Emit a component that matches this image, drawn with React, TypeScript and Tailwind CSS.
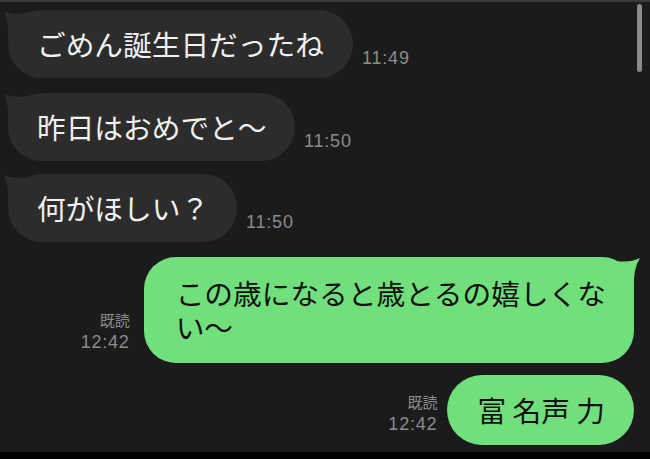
import React from "react";

type Incoming = { text: string; time: string; width: string; gapTop: string };

const incoming: Incoming[] = [
  { text: "ごめん誕生日だったね", time: "11:49", width: "w-[345px]", gapTop: "mt-[8px]" },
  { text: "昨日はおめでと〜", time: "11:50", width: "w-[287px]", gapTop: "mt-[15px]" },
  { text: "何がほしい？", time: "11:50", width: "w-[229px]", gapTop: "mt-[13px]" },
];

const jp = "font-['Noto_Sans_CJK_JP','Noto_Sans',sans-serif]";
const num = "font-['Liberation_Sans','Noto_Sans',sans-serif]";

function LeftTail() {
  return (
    <svg
      className="absolute left-[-5px] top-[0px]"
      width="26"
      height="30"
      viewBox="0 0 26 30"
    >
      <path d="M1 1 Q 10 5 24 3 L 24 30 L 5 30 Q 6 12 1 1 Z" fill="#2c2c2c" />
    </svg>
  );
}

function RightTail() {
  return (
    <svg
      className="absolute right-[-6px] top-[0px]"
      width="24"
      height="30"
      viewBox="0 0 24 30"
    >
      <path d="M24 1 Q 14 6 0 4 L 0 30 L 18 30 Q 17 12 24 1 Z" fill="#71df7c" />
    </svg>
  );
}

function ReadMark() {
  return (
    <div className="flex flex-col items-end text-[#8b8b8b]">
      <span className={`${jp} text-[15px] leading-[22px]`}>既読</span>
      <span className={`${num} text-[18px] leading-[23px] tracking-[0.8px]`}>12:42</span>
    </div>
  );
}

export default function App() {
  return (
    <div className="flex h-[459px] w-full flex-col overflow-hidden bg-[#1b1b1b]">
      <div className="h-[2px] bg-[#3a3a3a]" />
      <div className="relative flex flex-1 flex-col">
        {/* scrollbar */}
        <div className="absolute right-[8px] top-[2px] h-[68px] w-[5px] rounded-full bg-[#8a8a8a]" />

        {incoming.map((m, i) => (
          <div key={i} className={`${m.gapTop} flex items-end gap-[9px] pl-[8px]`}>
            <div
              className={`relative flex h-[68px] ${m.width} items-center rounded-[34px] bg-[#2c2c2c] pl-[29px] ${jp} text-[28.7px] text-[#f1f1f1]`}
            >
              <LeftTail />
              <span className="relative">{m.text}</span>
            </div>
            <span className={`${num} mb-[8px] text-[18px] leading-[23px] tracking-[0.8px] text-[#8b8b8b]`}>
              {m.time}
            </span>
          </div>
        ))}

        <div className="mt-[15px] flex items-end justify-end gap-[14px] pr-[16px]">
          <div className="mb-[9px]">
            <ReadMark />
          </div>
          <div
            className={`relative rounded-[32px] bg-[#71df7c] py-[19px] pl-[32px] pr-[28px] ${jp} text-[28.7px] leading-[34px] text-[#111]`}
          >
            <RightTail />
            <span className="relative">
              この歳になると歳とるの嬉しくな
              <br />
              い〜
            </span>
          </div>
        </div>

        <div className="mt-[12px] flex items-end justify-end gap-[10px] pr-[16px]">
          <div className="mb-[9px]">
            <ReadMark />
          </div>
          <div
            className={`flex h-[70px] items-center rounded-[35px] bg-[#71df7c] pl-[30px] pr-[29px] ${jp} text-[28.7px] text-[#111]`}
          >
            富 名声 力
          </div>
        </div>
      </div>
      <div className="h-[7px] bg-black" />
    </div>
  );
}
